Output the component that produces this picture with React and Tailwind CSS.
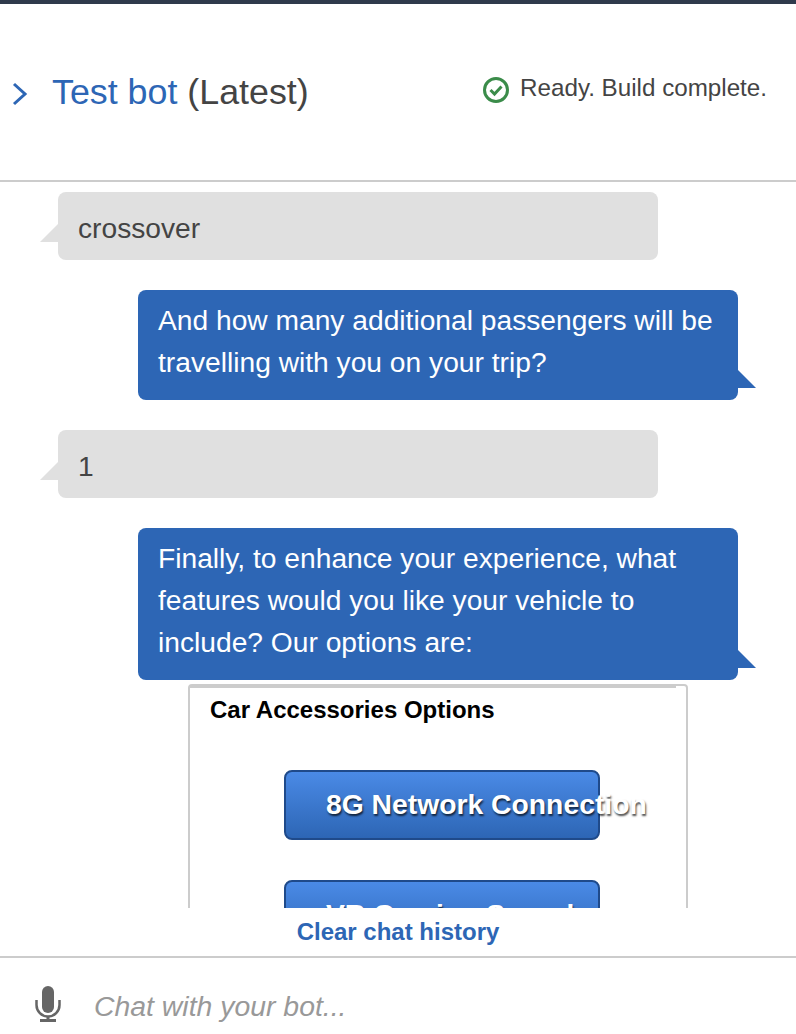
import { useState } from "react"

function BotMessage({ children }) {
  return (
    <div className="relative ml-[138px] w-[600px] rounded-lg bg-[#2d66b5] px-5 pb-[17px] pt-[9px] text-[28.2px] leading-[42px] text-white">
      {children}
      <div className="absolute bottom-[12px] left-full h-[18px] w-[18px] bg-[#2d66b5] [clip-path:polygon(0_0,100%_100%,0_100%)]" />
    </div>
  )
}

function UserMessage({ children }) {
  return (
    <div className="relative ml-[58px] w-[600px] rounded-lg bg-[#e0e0e0] px-5 pb-[11px] pt-[15px] text-[28.2px] leading-[42px] text-[#444]">
      {children}
      <div className="absolute bottom-[18px] right-full h-[18px] w-[18px] bg-[#e0e0e0] [clip-path:polygon(100%_0,100%_100%,0_100%)]" />
    </div>
  )
}

function OptionButton({ children }) {
  return (
    <button className="ml-[94px] flex h-[70px] w-[316px] shrink-0 items-center whitespace-nowrap rounded-lg border-2 border-[#1f4a8a] bg-gradient-to-b from-[#4a8ae6] to-[#2d66b5] pb-[1px] pl-[40px] text-[28.3px] font-bold text-white [text-shadow:1px_2px_2px_rgba(0,0,0,0.7)]">
      {children}
    </button>
  )
}

export default function App() {
  const [message, setMessage] = useState("")

  return (
    <div className="flex h-[1034px] w-[796px] flex-col overflow-hidden bg-white font-['Liberation_Sans',Arial,sans-serif]">
      <div className="h-1 shrink-0 bg-[#2f3a4c]" />

      <header className="flex h-[178px] shrink-0 items-center justify-between border-b-2 border-[#ccc] pl-[12px] pr-[29px]">
        <div className="flex items-center">
          <svg width="16" height="24" viewBox="0 0 16 24" fill="none" stroke="#2d66b5" strokeWidth="3" className="mt-1">
            <path d="M2 2 L13 12 L2 22" />
          </svg>
          <h1 className="ml-6 text-[35.8px] leading-10 text-[#444]">
            <span className="text-[#2d66b5]">Test bot</span> (Latest)
          </h1>
        </div>
        <div className="mb-[8px] flex items-center gap-[10px] text-[24.2px] text-[#444]">
          <svg width="28" height="28" viewBox="0 0 28 28" fill="none" stroke="#3b8c4a" className="mt-1">
            <circle cx="14" cy="14" r="11.5" strokeWidth="3" />
            <path d="M8.5 14 L12.5 18 L19.5 10.5" strokeWidth="3" />
          </svg>
          <span>Ready. Build complete.</span>
        </div>
      </header>

      <main className="flex h-[726px] shrink-0 flex-col gap-[30px] overflow-hidden pt-[10px]">
        <UserMessage>crossover</UserMessage>
        <BotMessage>
          And how many additional passengers will be<br />
          travelling with you on your trip?
        </BotMessage>
        <UserMessage>1</UserMessage>
        <div className="flex flex-col">
          <BotMessage>
            Finally, to enhance your experience, what<br />
            features would you like your vehicle to<br />
            include? Our options are:
          </BotMessage>
          <div className="ml-[188px] mt-1 flex h-[400px] w-[500px] shrink-0 flex-col rounded border-2 border-[#ccc]">
            <div className="mr-[10px] h-[2px] shrink-0 bg-[#ccc]" />
            <h2 className="mb-[44px] ml-5 mt-[6px] text-[24px] font-bold leading-[32px] text-black">Car Accessories Options</h2>
            <div className="flex flex-col gap-10">
              <OptionButton>8G Network Connection</OptionButton>
              <OptionButton>VR Gaming Sound</OptionButton>
            </div>
          </div>
        </div>
      </main>

      <div className="flex h-[50px] shrink-0 items-center justify-center border-b-2 border-[#ccc]">
        <a href="#" className="text-[24px] font-bold text-[#2d66b5]">Clear chat history</a>
      </div>

      <div className="flex flex-1 items-center pl-[35px] pt-5">
        <svg width="26" height="36" viewBox="0 0 26 36" className="mb-1 shrink-0">
          <rect x="7" y="0" width="12" height="27" rx="6" fill="#666" />
          <path d="M1.5 14 V19 A11.5 11.5 0 0 0 24.5 19 V14" fill="none" stroke="#666" strokeWidth="2.5" />
          <rect x="11.5" y="30" width="3" height="4" fill="#666" />
          <rect x="5" y="33" width="16" height="3" fill="#666" />
        </svg>
        <input
          value={message}
          onChange={(e) => setMessage(e.target.value)}
          placeholder="Chat with your bot..."
          className="ml-[33px] flex-1 text-[28.4px] text-[#444] outline-none placeholder:italic placeholder:text-[#999]"
        />
      </div>
    </div>
  )
}
